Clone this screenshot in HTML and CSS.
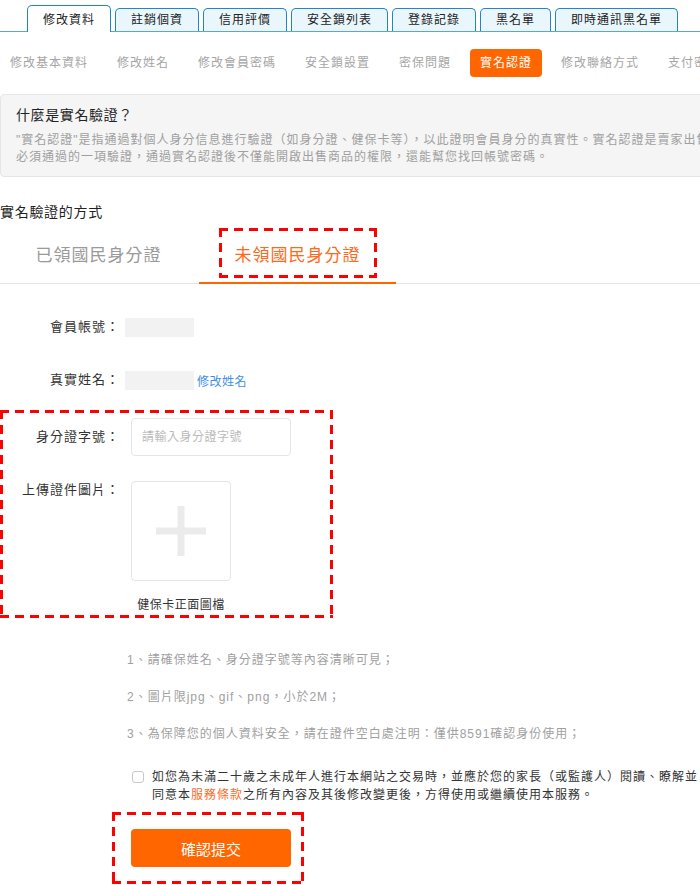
FILE: index.html
```html
<!DOCTYPE html>
<html>
<head>
	<meta charset="utf-8">
	<title>實名認證</title>
	<link rel="stylesheet" href="styles.css">
</head>
<body>
	<div class="page">
		<ul class="tabs">
			<li class="on">修改資料</li>
			<li>註銷個資</li>
			<li>信用評價</li>
			<li>安全鎖列表</li>
			<li>登錄記錄</li>
			<li>黑名單</li>
			<li>即時通訊黑名單</li>
		</ul>

		<div class="subnav">
			<a>修改基本資料</a>
			<a>修改姓名</a>
			<a>修改會員密碼</a>
			<a>安全鎖設置</a>
			<a>密保問題</a>
			<a class="on">實名認證</a>
			<a>修改聯絡方式</a>
			<a>支付密碼</a>
		</div>

		<div class="intro">
			<h3>什麼是實名驗證？</h3>
			<p>"實名認證"是指通過對個人身分信息進行驗證（如身分證、健保卡等），以此證明會員身分的真實性。實名認證是賣家出售商品時<br>必須通過的一項驗證，通過實名認證後不僅能開啟出售商品的權限，還能幫您找回帳號密碼。</p>
		</div>

		<div class="way-title">實名驗證的方式</div>
		<div class="way-tabs">
			<div class="way-tab"><span>已領國民身分證</span></div>
			<div class="way-tab on"><span class="dash">未領國民身分證</span></div>
		</div>

		<div class="row first">
			<label>會員帳號：</label>
			<span class="blank"></span>
		</div>
		<div class="row second">
			<label>真實姓名：</label>
			<span class="blank"></span>
			<a class="edit">修改姓名</a>
		</div>

		<div class="mark-box dash">
			<div class="row">
				<label>身分證字號：</label>
				<input type="text" class="txt" placeholder="請輸入身分證字號">
			</div>
			<div class="row upload-row">
				<label>上傳證件圖片：</label>
				<div class="upload">
					<svg width="50" height="50" viewBox="0 0 50 50">
						<rect x="0" y="21.5" width="50" height="7" fill="#ebebeb"/>
						<rect x="21.5" y="0" width="7" height="50" fill="#ebebeb"/>
					</svg>
				</div>
			</div>
			<div class="caption">健保卡正面圖檔</div>
		</div>

		<div class="notes">
			<p>1、請確保姓名、身分證字號等內容清晰可見；</p>
			<p>2、圖片限jpg、gif、png，小於2M；</p>
			<p>3、為保障您的個人資料安全，請在證件空白處注明：僅供8591確認身份使用；</p>
		</div>

		<div class="agree">
			<span class="check"></span>
			<p>如您為未滿二十歲之未成年人進行本網站之交易時，並應於您的家長（或監護人）閱讀、瞭解並<br>同意本<a>服務條款</a>之所有內容及其後修改變更後，方得使用或繼續使用本服務。</p>
		</div>

		<div class="submit-box dash">
			<input type="button" class="submit" value="確認提交">
		</div>
	</div>
</body>
</html>
```

FILE: styles.css
```css
*{
	padding: 0;
	margin: 0;
	box-sizing: border-box;
}
html,body{
	overflow: hidden;
}
body{
	font-family: "Liberation Sans", "Noto Sans CJK TC", sans-serif;
	color: #333;
	background: #fff;
}
.page{
	width: 780px;
}
/* 紅色虛線標記框 */
.dash{
	border: 3px solid transparent;
	background:
		repeating-linear-gradient(90deg, #f00 0 9px, transparent 9px 15px) left top / 100% 3px no-repeat border-box,
		repeating-linear-gradient(90deg, #f00 0 9px, transparent 9px 15px) left bottom / 100% 3px no-repeat border-box,
		repeating-linear-gradient(180deg, #f00 0 9px, transparent 9px 15px) left top / 3px 100% no-repeat border-box,
		repeating-linear-gradient(180deg, #f00 0 9px, transparent 9px 15px) right top / 3px 100% no-repeat border-box;
}
/* 頂部頁籤 */
.tabs{
	list-style: none;
	display: flex;
	align-items: flex-end;
	gap: 4px;
	height: 32px;
	padding-left: 27px;
	border-bottom: 1px solid #5ea4d8;
}
.tabs li{
	height: 23px;
	line-height: 22px;
	padding: 0 15px;
	font-size: 12px;
	letter-spacing: 1px;
	color: #222;
	background: #e9f7fd;
	border: 1px solid #1f86c8;
	border-bottom: 0;
	border-radius: 5px 5px 0 0;
}
.tabs li.on{
	height: 27px;
	padding-top: 3px;
	margin-bottom: -1px;
	background: #fff;
}
/* 子選單 */
.subnav{
	margin-top: 17px;
	display: flex;
	gap: 9px;
	white-space: nowrap;
}
.subnav a{
	height: 28px;
	line-height: 28px;
	padding: 0 10px;
	font-size: 12px;
	letter-spacing: 1px;
	color: #a5a5a5;
	border-radius: 4px;
}
.subnav a.on{
	background: #ff6600;
	color: #fff;
}
/* 說明 */
.intro{
	margin-top: 17px;
	padding: 10px 15px;
	background: #f5f5f5;
	border: 1px solid #e6e6e6;
	border-radius: 4px;
}
.intro h3{
	font-size: 14px;
	font-weight: normal;
	letter-spacing: 0.6px;
	line-height: 20px;
	color: #222;
}
.intro p{
	margin-top: 7px;
	font-size: 12px;
	letter-spacing: 1px;
	line-height: 17px;
	color: #a0a0a0;
	white-space: nowrap;
}
.way-title{
	margin-top: 25px;
	font-size: 14px;
	letter-spacing: 0.7px;
	line-height: 20px;
	color: #222;
}
.way-tabs{
	margin-top: 6px;
	display: flex;
	border-bottom: 1px solid #e5e5e5;
}
.way-tab{
	width: 197px;
	text-align: center;
	padding-bottom: 4px;
}
.way-tab span{
	display: inline-block;
	padding: 13px 13px 7px;
	line-height: 24px;
	font-size: 17px;
	letter-spacing: 1px;
	color: #9a9a9a;
	border: 3px solid transparent;
}
.way-tab.on{
	margin-left: 2px;
	border-bottom: 2px solid #ff6600;
	margin-bottom: -1px;
}
.way-tab.on span{
	color: #ff6a1a;
}
/* 表單 */
.row{
	display: flex;
	align-items: center;
}
.row label{
	width: 120px;
	text-align: right;
	font-size: 13px;
	letter-spacing: 1px;
	line-height: 20px;
	color: #333;
}
.row.first{
	margin-top: 33px;
}
.row.second{
	margin-top: 33px;
	align-items: flex-end;
}
.blank{
	width: 69px;
	height: 19px;
	margin-left: 5px;
	background: #f2f2f2;
}
.edit{
	margin-left: 3px;
	font-size: 12px;
	letter-spacing: 0.5px;
	line-height: 16px;
	color: #3d8fe8;
}
.mark-box{
	width: 333px;
	margin-top: 20px;
	padding: 5px 0 1px;
}
.mark-box .row label{
	width: 117px;
}
.txt{
	width: 160px;
	height: 38px;
	margin-left: 11px;
	padding: 0 10px;
	font-family: inherit;
	font-size: 12px;
	letter-spacing: 0.5px;
	border: 1px solid #e5e5e5;
	border-radius: 4px;
	outline: none;
}
.txt::placeholder{
	color: #bbb;
}
.upload-row{
	margin-top: 25px;
	align-items: flex-start;
}
.upload-row label{
	line-height: 18px;
}
.upload{
	width: 100px;
	height: 100px;
	margin-left: 11px;
	border: 1px solid #e5e5e5;
	border-radius: 4px;
	display: flex;
	align-items: center;
	justify-content: center;
}
.caption{
	width: 100px;
	margin: 15px 0 0 128px;
	text-align: center;
	font-size: 12px;
	letter-spacing: 0.5px;
	line-height: 18px;
	color: #333;
}
.notes{
	margin-top: 33px;
	padding-left: 127px;
}
.notes p{
	font-size: 12px;
	letter-spacing: 1px;
	line-height: 18px;
	color: #a0a0a0;
	margin-bottom: 19px;
}
.notes p:last-child{
	margin-bottom: 0;
}
.agree{
	margin-top: 25px;
	padding-left: 132px;
	display: flex;
	align-items: flex-start;
}
.check{
	width: 12px;
	height: 12px;
	margin-top: 3px;
	border: 1px solid #c8c8c8;
	border-radius: 3px;
	flex: none;
}
.agree p{
	margin-left: 8px;
	font-size: 12px;
	letter-spacing: 1px;
	line-height: 18px;
	color: #333;
	white-space: nowrap;
}
.agree a{
	color: #ff6a2a;
}
.submit-box{
	width: 192px;
	margin: 8px 0 0 112px;
	padding: 14px 0 14px 16px;
}
.submit{
	display: block;
	width: 160px;
	height: 38px;
	font-family: inherit;
	font-size: 15px;
	color: #fff;
	background: #ff6600;
	border: 0;
	border-radius: 4px;
	outline: none;
}
```
